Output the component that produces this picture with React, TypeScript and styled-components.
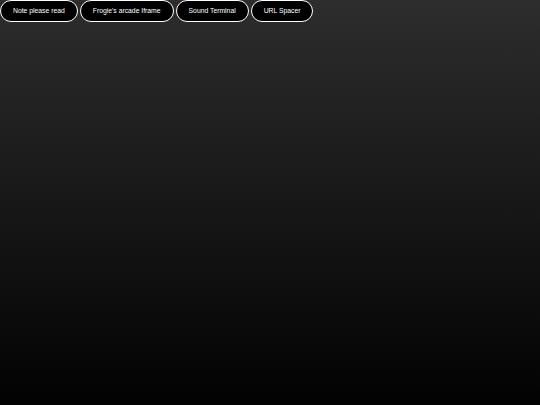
import styled, { createGlobalStyle } from "styled-components";

const GlobalStyle = createGlobalStyle`
  html, body {
    margin: 0;
    padding: 0;
    height: 100%;
  }
  body {
    background: #000000;
    font-family: "Liberation Sans", Arial, sans-serif;
    -webkit-font-smoothing: antialiased;
  }
`;

const Page = styled.div`
  min-height: 100vh;
  background: linear-gradient(to bottom, #2d2d2d 0%, #020202 100%);
`;

const NavBar = styled.nav`
  display: flex;
  gap: 2px;
  align-items: flex-start;
`;

const PillButton = styled.button`
  height: 22px;
  padding: 0 12px;
  border: 1.3px solid #ffffff;
  border-radius: 11px;
  background: #000000;
  color: #ffffff;
  font-family: "Liberation Sans", Arial, sans-serif;
  font-size: 6.8px;
  line-height: 1;
  cursor: pointer;
  white-space: nowrap;
`;

const links = ["Note please read", "Frogie's arcade Iframe", "Sound Terminal", "URL Spacer"];

function App() {
  return (
    <Page>
      <GlobalStyle />
      <NavBar>
        {links.map((label) => (
          <PillButton key={label}>{label}</PillButton>
        ))}
      </NavBar>
    </Page>
  );
}

export default App;
